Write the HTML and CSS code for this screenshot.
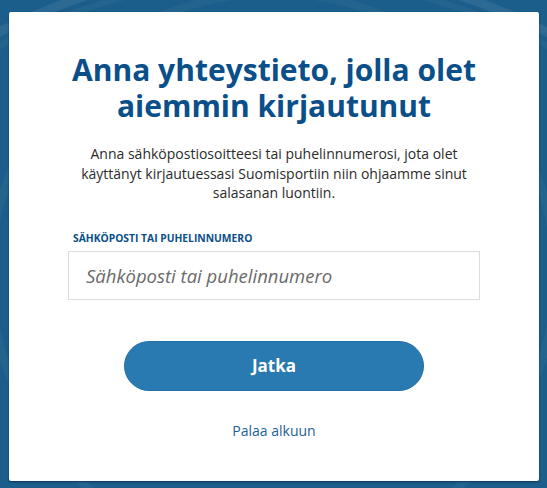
FILE: index.html
```html
<!DOCTYPE html>
<html lang="fi">
<head>
<meta charset="utf-8">
<title>Anna yhteystieto</title>
<link rel="stylesheet" href="styles.css">
</head>
<body>
<svg class="bg" width="547" height="488" viewBox="0 0 547 488" aria-hidden="true">
  <circle cx="273" cy="566" r="600" fill="none" stroke="#ffffff" stroke-opacity="0.08" stroke-width="9"/>
  <circle cx="273" cy="566" r="588" fill="none" stroke="#ffffff" stroke-opacity="0.04" stroke-width="6"/>
  <circle cx="273" cy="275" r="282" fill="none" stroke="#ffffff" stroke-opacity="0.04" stroke-width="8"/>
</svg>
<main class="card">
  <h1 class="title">Anna yhteystieto, jolla olet aiemmin kirjautunut</h1>
  <p class="lead">Anna sähköpostiosoitteesi tai puhelinnumerosi, jota olet käyttänyt kirjautuessasi Suomisportiin niin ohjaamme sinut salasanan luontiin.</p>
  <form class="form">
    <label class="label" for="contact">Sähköposti tai puhelinnumero</label>
    <input class="field" id="contact" type="text" placeholder="Sähköposti tai puhelinnumero">
    <button class="btn" type="button">Jatka</button>
  </form>
  <a class="back" href="#">Palaa alkuun</a>
</main>
</body>
</html>
```
FILE: styles.css
```css
html, body {
  margin: 0;
  padding: 0;
}
body {
  position: relative;
  box-sizing: border-box;
  width: 547px;
  height: 488px;
  padding: 12px 8px 7px 9px;
  background: #1b5e8b;
  font-family: "Open Sans", "Noto Sans", sans-serif;
  overflow: hidden;
}
.bg {
  position: absolute;
  left: 0;
  top: 0;
}
.card {
  position: relative;
  box-sizing: border-box;
  width: 530px;
  height: 469px;
  background: #ffffff;
  border-radius: 2px;
  box-shadow: 0 1px 2px rgba(5, 35, 70, 0.7);
  padding-top: 40px;
  display: flex;
  flex-direction: column;
  align-items: center;
}
.title {
  margin: 0;
  width: 470px;
  font-size: 30px;
  line-height: 36px;
  font-weight: 700;
  color: #0a4f89;
  text-align: center;
}
.lead {
  margin: 20px 0 0;
  width: 400px;
  font-size: 14px;
  line-height: 19.6px;
  color: #2b2b2b;
  text-align: center;
}
.form {
  margin-top: 28px;
  width: 412px;
  display: flex;
  flex-direction: column;
  align-items: center;
}
.label {
  align-self: stretch;
  padding-left: 5px;
  font-size: 10.3px;
  line-height: 14px;
  font-weight: 700;
  text-transform: uppercase;
  color: #0a4f89;
}
.field {
  margin-top: 6px;
  box-sizing: border-box;
  width: 412px;
  height: 49px;
  border: 1px solid #dcdcdc;
  border-radius: 0;
  padding: 0 0 0 17px;
  font-family: inherit;
  font-size: 18.5px;
  font-style: italic;
  color: #333;
  background: #fff;
  outline: none;
}
.field::placeholder {
  color: #6a6a6a;
  opacity: 1;
}
.btn {
  margin-top: 41px;
  width: 300px;
  height: 50px;
  border: 1px solid #2471a8;
  border-radius: 25px;
  background: #2a7ab2;
  color: #ffffff;
  font-family: inherit;
  font-size: 17px;
  font-weight: 700;
  cursor: pointer;
}
.back {
  margin-top: 30px;
  font-size: 14px;
  line-height: 20px;
  color: #235f94;
  text-decoration: none;
}
```
